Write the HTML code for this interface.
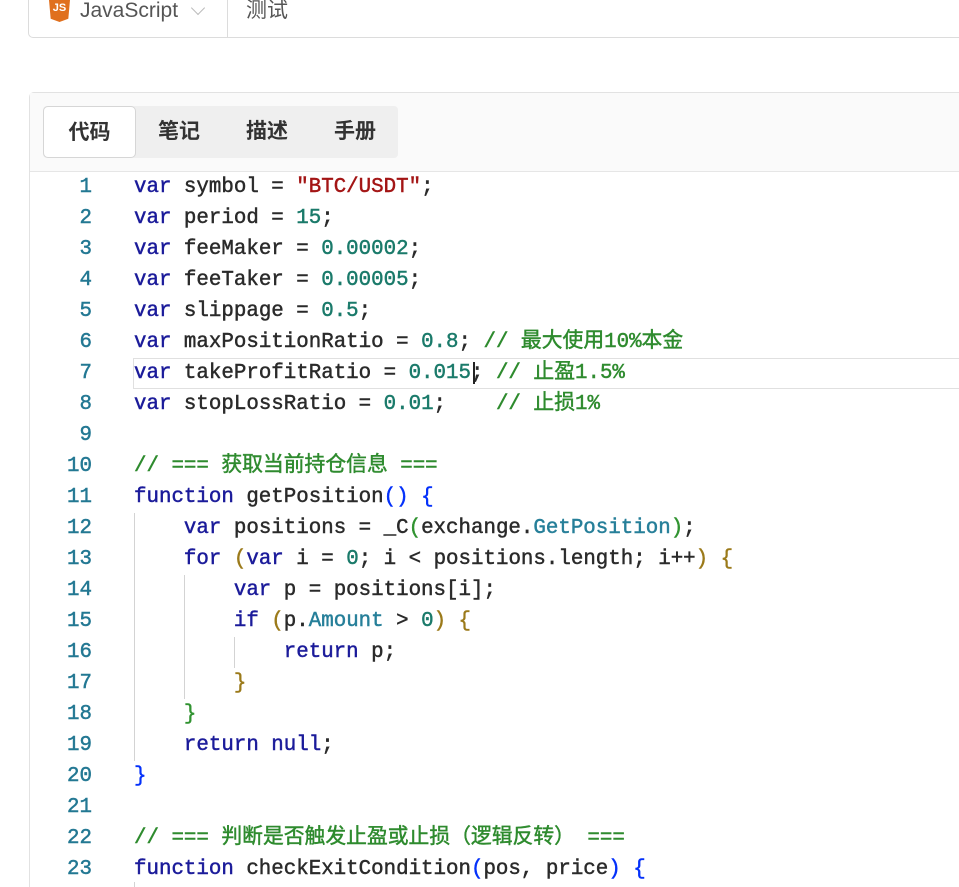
<!DOCTYPE html>
<html><head><meta charset="utf-8">
<style>
html,body{margin:0;padding:0;background:#fff;width:959px;height:887px;overflow:hidden;position:relative;font-family:"Liberation Sans","Noto Sans CJK SC",sans-serif}
.top{position:absolute;left:28px;top:-10px;width:931px;height:48px;border:1px solid #dcdcdc;border-right:none;border-radius:5px 0 0 5px;box-sizing:border-box;background:#fff}
.js{position:absolute;left:49px;top:0px;width:21px;height:22px;background:#e0701e;clip-path:polygon(0 0,100% 0,92% 85%,50% 100%,8% 85%);color:#fff;font-size:11px;font-weight:bold;line-height:17px;text-align:center}
.jst{position:absolute;left:80px;top:-1px;font-size:21px;color:#555;line-height:24px}
.chev{position:absolute;left:193px;top:3px;width:9px;height:9px;border-right:1.3px solid #bbb;border-bottom:1.3px solid #bbb;transform:rotate(45deg)}
.div{position:absolute;left:227px;top:0;width:1px;height:38px;background:#dcdcdc}
.test{position:absolute;left:246px;top:-1px;font-size:21px;color:#555;line-height:24px}
.panel{position:absolute;left:29px;top:92px;width:930px;height:795px;border:1px solid #e2e2e2;border-right:none;border-bottom:none;border-radius:5px 0 0 0;background:#fff;box-sizing:border-box}
.hdr{position:absolute;left:30px;top:93px;width:929px;height:78px;background:#fafafa;border-bottom:1px solid #e6e6e6}
.tabs{position:absolute;left:43px;top:106px;width:355px;height:52px;background:#efefef;border-radius:4px}
.tab{position:absolute;top:106px;height:52px;line-height:52px;font-size:21px;font-weight:bold;color:#333}
.act{left:43px;width:93px;background:#fff;border:1px solid #d6d6d6;border-radius:5px;box-sizing:border-box;text-align:center}
.code{position:absolute;left:0;top:172px;font-family:"Liberation Mono","Noto Sans CJK SC",monospace;font-size:20.8px;color:#2a2a2a;-webkit-text-stroke:0.45px currentColor}
.ln{position:absolute;left:40px;width:52px;text-align:right;color:#237893;height:31px;line-height:31px}
.l{position:absolute;left:134px;white-space:pre;height:31px;line-height:31px}
.k{color:#1b1b9a}.n{color:#1a7a6a}.s{color:#a31515}.c{color:#2e8b2e}.m{color:#267f99}
.b1{color:#0431fa}.b2{color:#319331}.b3{color:#9b7a1a}
.hl{position:absolute;left:133px;top:358px;width:830px;height:31px;border:1px solid #e0e0e0;box-sizing:border-box}
.g{position:absolute;width:1px;background:#d3d3d3}
.cur{position:absolute;left:473px;top:362px;width:2px;height:22px;background:#222}
</style></head><body>
<div class="top"></div>
<div class="js">JS</div>
<div class="jst">JavaScript</div>
<div class="chev"></div>
<div class="div"></div>
<div class="test">测试</div>
<div class="panel"></div>
<div class="hdr"></div>
<div class="tabs"></div>
<div class="tab act">代码</div>
<div class="tab" style="left:158px">笔记</div>
<div class="tab" style="left:246px">描述</div>
<div class="tab" style="left:334px">手册</div>
<div class="hl"></div>
<div class="g" style="left:134px;top:513px;height:248px"></div>
<div class="g" style="left:184px;top:575px;height:124px"></div>
<div class="g" style="left:234px;top:637px;height:31px"></div>
<div class="g" style="left:134px;top:882px;height:5px"></div>
<div class="code">
<div class="ln" style="top:0">1</div><div class="l" style="top:0"><span class="k">var</span> symbol = <span class="s">"BTC/USDT"</span>;</div>
<div class="ln" style="top:31px">2</div><div class="l" style="top:31px"><span class="k">var</span> period = <span class="n">15</span>;</div>
<div class="ln" style="top:62px">3</div><div class="l" style="top:62px"><span class="k">var</span> feeMaker = <span class="n">0.00002</span>;</div>
<div class="ln" style="top:93px">4</div><div class="l" style="top:93px"><span class="k">var</span> feeTaker = <span class="n">0.00005</span>;</div>
<div class="ln" style="top:124px">5</div><div class="l" style="top:124px"><span class="k">var</span> slippage = <span class="n">0.5</span>;</div>
<div class="ln" style="top:155px">6</div><div class="l" style="top:155px"><span class="k">var</span> maxPositionRatio = <span class="n">0.8</span>; <span class="c">// 最大使用10%本金</span></div>
<div class="ln" style="top:186px">7</div><div class="l" style="top:186px"><span class="k">var</span> takeProfitRatio = <span class="n">0.015</span>; <span class="c">// 止盈1.5%</span></div>
<div class="ln" style="top:217px">8</div><div class="l" style="top:217px"><span class="k">var</span> stopLossRatio = <span class="n">0.01</span>;    <span class="c">// 止损1%</span></div>
<div class="ln" style="top:248px">9</div>
<div class="ln" style="top:279px">10</div><div class="l" style="top:279px"><span class="c">// === 获取当前持仓信息 ===</span></div>
<div class="ln" style="top:310px">11</div><div class="l" style="top:310px"><span class="k">function</span> getPosition<span class="b1">()</span> <span class="b1">{</span></div>
<div class="ln" style="top:341px">12</div><div class="l" style="top:341px">    <span class="k">var</span> positions = _C<span class="b2">(</span>exchange.<span class="m">GetPosition</span><span class="b2">)</span>;</div>
<div class="ln" style="top:372px">13</div><div class="l" style="top:372px">    <span class="k">for</span> <span class="b3">(</span><span class="k">var</span> i = <span class="n">0</span>; i &lt; positions.length; i++<span class="b3">)</span> <span class="b3">{</span></div>
<div class="ln" style="top:403px">14</div><div class="l" style="top:403px">        <span class="k">var</span> p = positions[i];</div>
<div class="ln" style="top:434px">15</div><div class="l" style="top:434px">        <span class="k">if</span> <span class="b3">(</span>p.<span class="m">Amount</span> &gt; <span class="n">0</span><span class="b3">)</span> <span class="b3">{</span></div>
<div class="ln" style="top:465px">16</div><div class="l" style="top:465px">            <span class="k">return</span> p;</div>
<div class="ln" style="top:496px">17</div><div class="l" style="top:496px">        <span class="b3">}</span></div>
<div class="ln" style="top:527px">18</div><div class="l" style="top:527px">    <span class="b2">}</span></div>
<div class="ln" style="top:558px">19</div><div class="l" style="top:558px">    <span class="k">return</span> <span class="k">null</span>;</div>
<div class="ln" style="top:589px">20</div><div class="l" style="top:589px"><span class="b1">}</span></div>
<div class="ln" style="top:620px">21</div>
<div class="ln" style="top:651px">22</div><div class="l" style="top:651px"><span class="c">// === 判断是否触发止盈或止损（逻辑反转） ===</span></div>
<div class="ln" style="top:682px">23</div><div class="l" style="top:682px"><span class="k">function</span> checkExitCondition<span class="b1">(</span>pos, price<span class="b1">)</span> <span class="b1">{</span></div>
</div>
<div class="cur"></div>
</body></html>
